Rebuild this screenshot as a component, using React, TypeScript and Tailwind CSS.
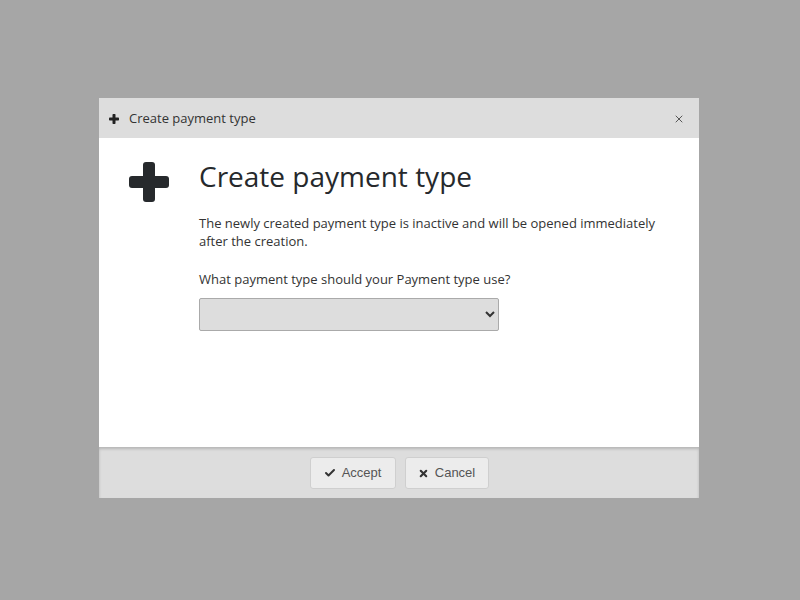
import { Check, X } from "lucide-react"

function PlusIcon({ size, className }: { size: number; className?: string }) {
  return (
    <svg width={size} height={size} viewBox="0 0 40 40" className={className}>
      <rect x="0" y="14" width="40" height="12" rx="3" fill="currentColor" />
      <rect x="14" y="0" width="12" height="40" rx="3" fill="currentColor" />
    </svg>
  )
}

export default function App() {
  return (
    <div className="w-[800px] h-[600px] bg-[#a6a6a6] pt-[98px] pl-[99px]" style={{ fontFamily: "'Open Sans', sans-serif" }}>
      <div className="w-[600px] h-[400px] flex flex-col bg-white">
        {/* Header */}
        <div className="h-[40px] bg-[#dddddd] flex items-center pl-[10px] pr-[14px] pt-[1px] text-[#333]">
          <PlusIcon size={10} className="text-[#222]" />
          <span className="ml-[10px] text-[13px]">Create payment type</span>
          <button className="ml-auto w-[12px] h-[12px] flex items-center justify-center text-[#333]">
            <X className="w-[12px] h-[12px]" strokeWidth={1.6} />
          </button>
        </div>

        {/* Body */}
        <div className="flex-1 flex px-[30px] pt-[18px] gap-[30px] text-[#333]">
          <div className="mt-[6px]">
            <PlusIcon size={40} className="text-[#26292c]" />
          </div>
          <div className="flex flex-col">
            <h1 className="text-[28px] leading-[40px] text-[#26292c]">Create payment type</h1>
            <p className="mt-[18px] text-[13px] leading-[18px] w-[470px]">
              The newly created payment type is inactive and will be opened immediately after the creation.
            </p>
            <p className="mt-[20px] text-[13px] leading-[18px]">What payment type should your Payment type use?</p>
            <select className="mt-[10px] w-[300px] h-[33px] bg-[#dddddd] border border-[#aaaaaa] rounded-[2px] text-[13px] px-1">
              <option></option>
            </select>
          </div>
        </div>

        {/* Footer */}
        <div className="h-[51px] bg-[#dddddd] flex items-start justify-center gap-[9px] pt-[10px] shadow-[inset_0_2px_3px_rgba(0,0,0,0.18)]" style={{ fontFamily: "'Liberation Sans', Arial, sans-serif" }}>
          <button className="w-[86px] h-[32px] flex items-center justify-center gap-[6px] bg-[#ececec] border border-[#cfcfcf] rounded-[3px] text-[13px] text-[#555]">
            <Check className="w-[12px] h-[12px] text-[#333]" strokeWidth={4} />
            Accept
          </button>
          <button className="w-[84px] h-[32px] flex items-center justify-center gap-[6px] bg-[#ececec] border border-[#cfcfcf] rounded-[3px] text-[13px] text-[#555]">
            <X className="w-[11px] h-[11px] text-[#333]" strokeWidth={4.5} />
            Cancel
          </button>
        </div>
      </div>
    </div>
  )
}
